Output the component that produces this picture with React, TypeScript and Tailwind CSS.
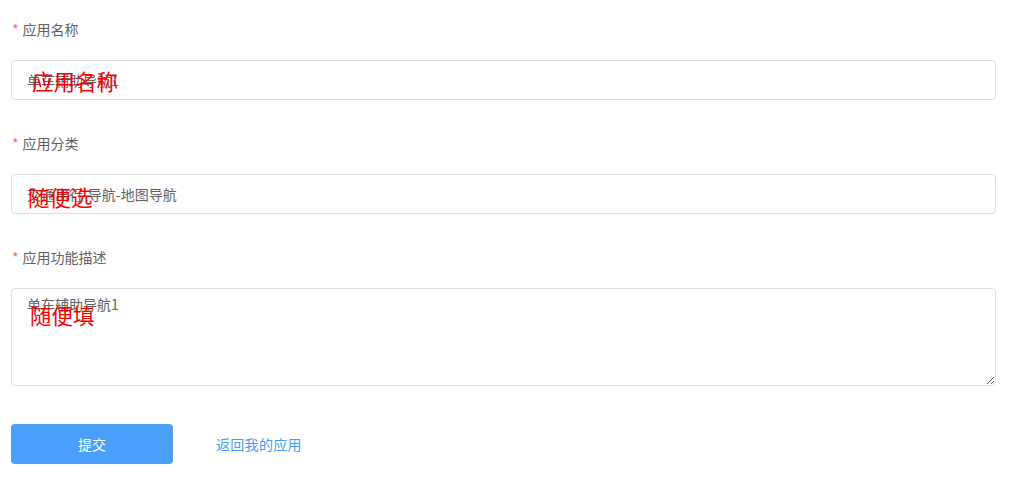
import React from "react";

const font = { fontFamily: '"Noto Sans CJK SC", "Noto Sans", sans-serif' };

function Label({ text }: { text: string }) {
  return (
    <div className="h-[40px] flex items-center pb-[2px] pl-[1px] text-[14px] text-[#606266]">
      <span className="text-[#f56c6c] mr-[4px]">*</span>
      <span>{text}</span>
    </div>
  );
}

export default function App() {
  return (
    <div className="w-[1024px] h-[491px] bg-white pt-[10px] pl-[11px]" style={font}>
      <div className="w-[985px] flex flex-col">
        <div className="mb-[24px]">
          <Label text="应用名称" />
          <div className="relative mt-[10px]">
            <input
              readOnly
              value="单车辅助导航1"
              className="w-full h-[40px] border border-[#dcdfe6] rounded-[4px] px-[15px] text-[14px] text-[#606266] outline-none bg-white"
              style={font}
            />
            <span className="absolute left-[21px] top-[6px] text-[21.5px] leading-[30px] text-[#ff0000]">应用名称</span>
          </div>
        </div>
        <div className="mb-[24px]">
          <Label text="应用分类" />
          <div className="relative mt-[10px]">
            <input
              readOnly
              value="交通出行-导航-地图导航"
              className="w-full h-[40px] border border-[#dcdfe6] rounded-[4px] px-[15px] text-[14px] text-[#606266] outline-none bg-white"
              style={font}
            />
            <span className="absolute left-[17px] top-[8px] text-[21.5px] leading-[30px] text-[#ff0000]">随便选</span>
          </div>
        </div>
        <div>
          <Label text="应用功能描述" />
          <div className="relative mt-[10px] h-[98px]">
            <textarea
              readOnly
              defaultValue="单车辅助导航1"
              className="block w-full h-[98px] border border-[#dcdfe6] rounded-[4px] px-[15px] py-[5px] text-[14px] leading-[1.5] text-[#606266] outline-none bg-white resize-y"
              style={font}
            />
            <span className="absolute left-[19px] top-[12px] text-[21.5px] leading-[30px] text-[#ff0000]">随便填</span>
          </div>
        </div>
        <div className="flex items-center mt-[38px]">
          <button className="w-[162px] h-[40px] rounded-[4px] bg-[#4a9ffa] text-white text-[14px]">提交</button>
          <span className="ml-[43px] text-[14px] tracking-[0.3px] text-[#409eff]">返回我的应用</span>
        </div>
      </div>
    </div>
  );
}
